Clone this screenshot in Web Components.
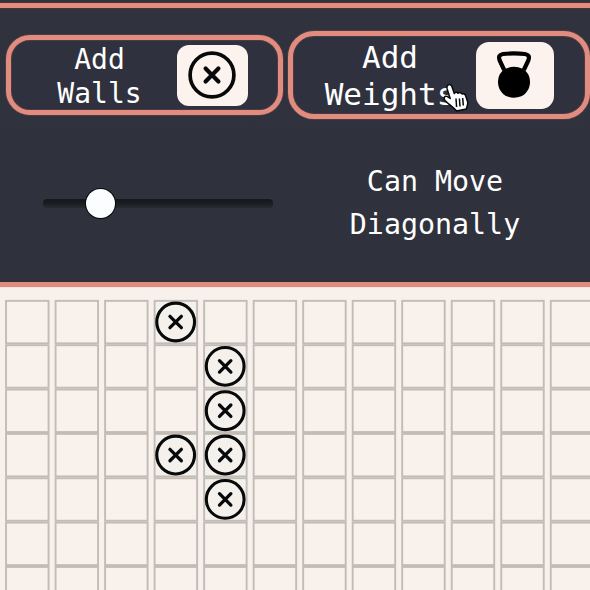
<!DOCTYPE html>
<html lang="en"><head><meta charset="utf-8"><title>Path grid</title>
<style>html,body{margin:0;height:100%;overflow:hidden;background:#f7f0eb}</style></head>
<body><path-app></path-app>
<script>
const define = (name, html, setup) => customElements.define(name, class extends HTMLElement {
  connectedCallback() {
    if (this.shadowRoot) return;
    this.attachShadow({ mode: "open" }).innerHTML = html;
    if (setup) setup(this, this.shadowRoot);
  }
});

define("wall-icon", `<style>:host{display:block;line-height:0}svg{width:100%;height:100%;overflow:visible}</style>
<svg viewBox="0 0 42 42" fill="none" stroke="#08090b" stroke-linecap="round"><circle cx="21" cy="21" r="18.400" stroke-width="3.100"/><path d="M15.600 15.600l10.800 10.800M26.400 15.600l-10.800 10.800" stroke-width="3.500"/></svg>`);

define("kettlebell-icon", `<style>:host{display:block;line-height:0}svg{width:100%;height:100%}</style>
<svg viewBox="0 0 37 48"><path d="M8.200 19L3.700 9.500C2.300 5.500 3.200 3.700 7 3Q18 1.800 29 3C32.800 3.700 33.700 5.500 32.300 9.500L27.800 19" fill="none" stroke="#000" stroke-width="4.200" stroke-linejoin="round"/><path d="M9.500 17.800Q18 13.600 26.500 17.800C31.500 20.500 34 25.500 34 31C34 37.500 30.500 42.700 25.300 45.300Q18 48 10.700 45.300C5.500 42.700 2 37.500 2 31C2 25.500 4.500 20.500 9.500 17.800Z"/></svg>`);

define("hand-cursor", `<style>:host{display:block;line-height:0}svg{width:100%;height:100%}</style>
<svg viewBox="0 0 28 29"><path d="M6 2C7.800 1 9.300 1.800 10 3.800L12.300 10.500C13.200 9 15 8.900 16 10.300C17.200 9.200 19.200 9.400 20 11C21.600 10.200 23.200 11.200 23.700 13L25.700 19C26.200 22 24.500 24 24.300 26L14.500 28C12 24.500 6.500 21.500 3 17.500C.8 14.500 3 12.300 5.500 13.600L8.200 15.500L5 5.500Q4.500 3.200 6 2Z" fill="#fff" stroke="#08090b" stroke-width="1.500" stroke-linejoin="round"/><path d="M14 15.500L14.600 24M17.400 15.500L18 23.500M20.700 15L21.300 22.500" stroke="#08090b" stroke-width="1.500"/></svg>`);

define("tool-button", `<style>
:host{display:flex;box-sizing:border-box;flex:none;border:5px solid #e28c80;background:#2f323e;color:#fff;box-shadow:0 0 0 1px #8b54504d,inset 0 0 0 1px #8b54504d}
.label{text-align:center;white-space:pre-line}
.tile{display:flex;align-items:center;justify-content:center;background:#fcf3ee;flex:none;box-sizing:border-box}
:host(.walls){width:277px;height:80px;border-radius:24px;margin-top:27px;font-size:28px;line-height:34px}
:host(.walls) .label{width:177px;padding-top:3px}
:host(.walls) .tile{width:71px;height:61px;border-radius:12px;margin:5px 0 0 -11px}
:host(.weights){width:302px;height:88px;border-radius:26px;margin-top:23px;font-size:31px;line-height:37px}
:host(.weights) .label{width:194px;padding-top:3px}
:host(.weights) .tile{width:78px;height:67px;border-radius:13px;margin:6px 0 0 -11px}
</style><div class="label"><slot></slot></div><div class="tile"><slot name="icon"></slot></div>`);

define("range-slider", `<style>:host{display:flex;align-items:center;width:230px;height:30px}
.track{flex:1;height:9px;border-radius:4px;background:linear-gradient(#15171b,#191c21 45%,#292b30);display:flex;align-items:center;padding-left:43px;box-sizing:border-box}
.thumb{width:29px;height:29px;border-radius:50%;background:#fcfdff;box-shadow:0 0 0 1px #08090b}</style>
<div class="track"><div class="thumb"></div></div>`);

define("grid-board", `<style>:host{display:block;width:590px;height:302px;overflow:hidden;background:#f7f0eb}
svg{display:block;overflow:visible}rect{fill:#f8f1ec;stroke:#c2bcb6;stroke-width:1.9}
.wall rect{fill:#f4f1ec}.wall g{fill:none;stroke:#08090b;stroke-linecap:round}</style><svg width="590" height="302"></svg>`,
(host, root) => {
  const walls = new Set(["3,0", "4,1", "4,2", "3,3", "4,3", "4,4"]);
  let out = "";
  for (let c = 0; c < 12; c++) for (let r = 0; r < 7; r++) {
    const wall = walls.has(c + "," + r);
    out += `<g class="${wall ? "wall" : ""}" transform="translate(${5.2 + c * 49.52} ${12 + r * 44.35})"><rect x=".85" y=".85" width="42.500" height="42.500"/>${wall ? '<g transform="translate(21.900 22)"><circle r="18.900" stroke-width="3.100"/><path d="M-5.700-5.700L5.700 5.700M5.700-5.700L-5.700 5.700" stroke-width="3.300"/></g>' : ""}</g>`;
  }
  root.querySelector("svg").innerHTML = out;
});

define("path-app", `<style>
:host{display:block;width:590px;height:590px;overflow:hidden;position:relative;font-family:"DejaVu Sans Mono",monospace;color:#fff}
.panel{height:287px;box-sizing:border-box;background:linear-gradient(#30333e,#2f323d);border-bottom:5px solid #e28c80;overflow:hidden}
.rule{height:5px;margin-top:3px;background:#e28c80;box-shadow:0 0 0 1px #4b3035}
.tools{display:flex;align-items:flex-start;gap:5px;padding-left:6px;height:112px}
.options{display:flex;padding:40px 0 0 43px}
range-slider{margin-top:28px}
.diag{width:244px;margin-left:40px;text-align:center;font-size:28.300px;line-height:43px}
.tools wall-icon{width:50px;height:50px;margin:-1px 2px 0 0}
kettlebell-icon{width:37px;height:48px;margin:-1px 1px 0 0}
hand-cursor{position:absolute;left:442px;top:82.500px;width:28px;height:29px}
grid-board{border-top:1px solid #f7e4dc;height:302px}
</style>
<div class="panel"><div class="rule"></div>
<div class="tools"><tool-button class="walls">Add
Walls<wall-icon slot="icon"></wall-icon></tool-button><tool-button class="weights">Add
Weights<kettlebell-icon slot="icon"></kettlebell-icon></tool-button></div>
<div class="options"><range-slider></range-slider><div class="diag">Can Move<br>Diagonally</div></div></div>
<grid-board></grid-board><hand-cursor></hand-cursor>`);
</script></body></html>
